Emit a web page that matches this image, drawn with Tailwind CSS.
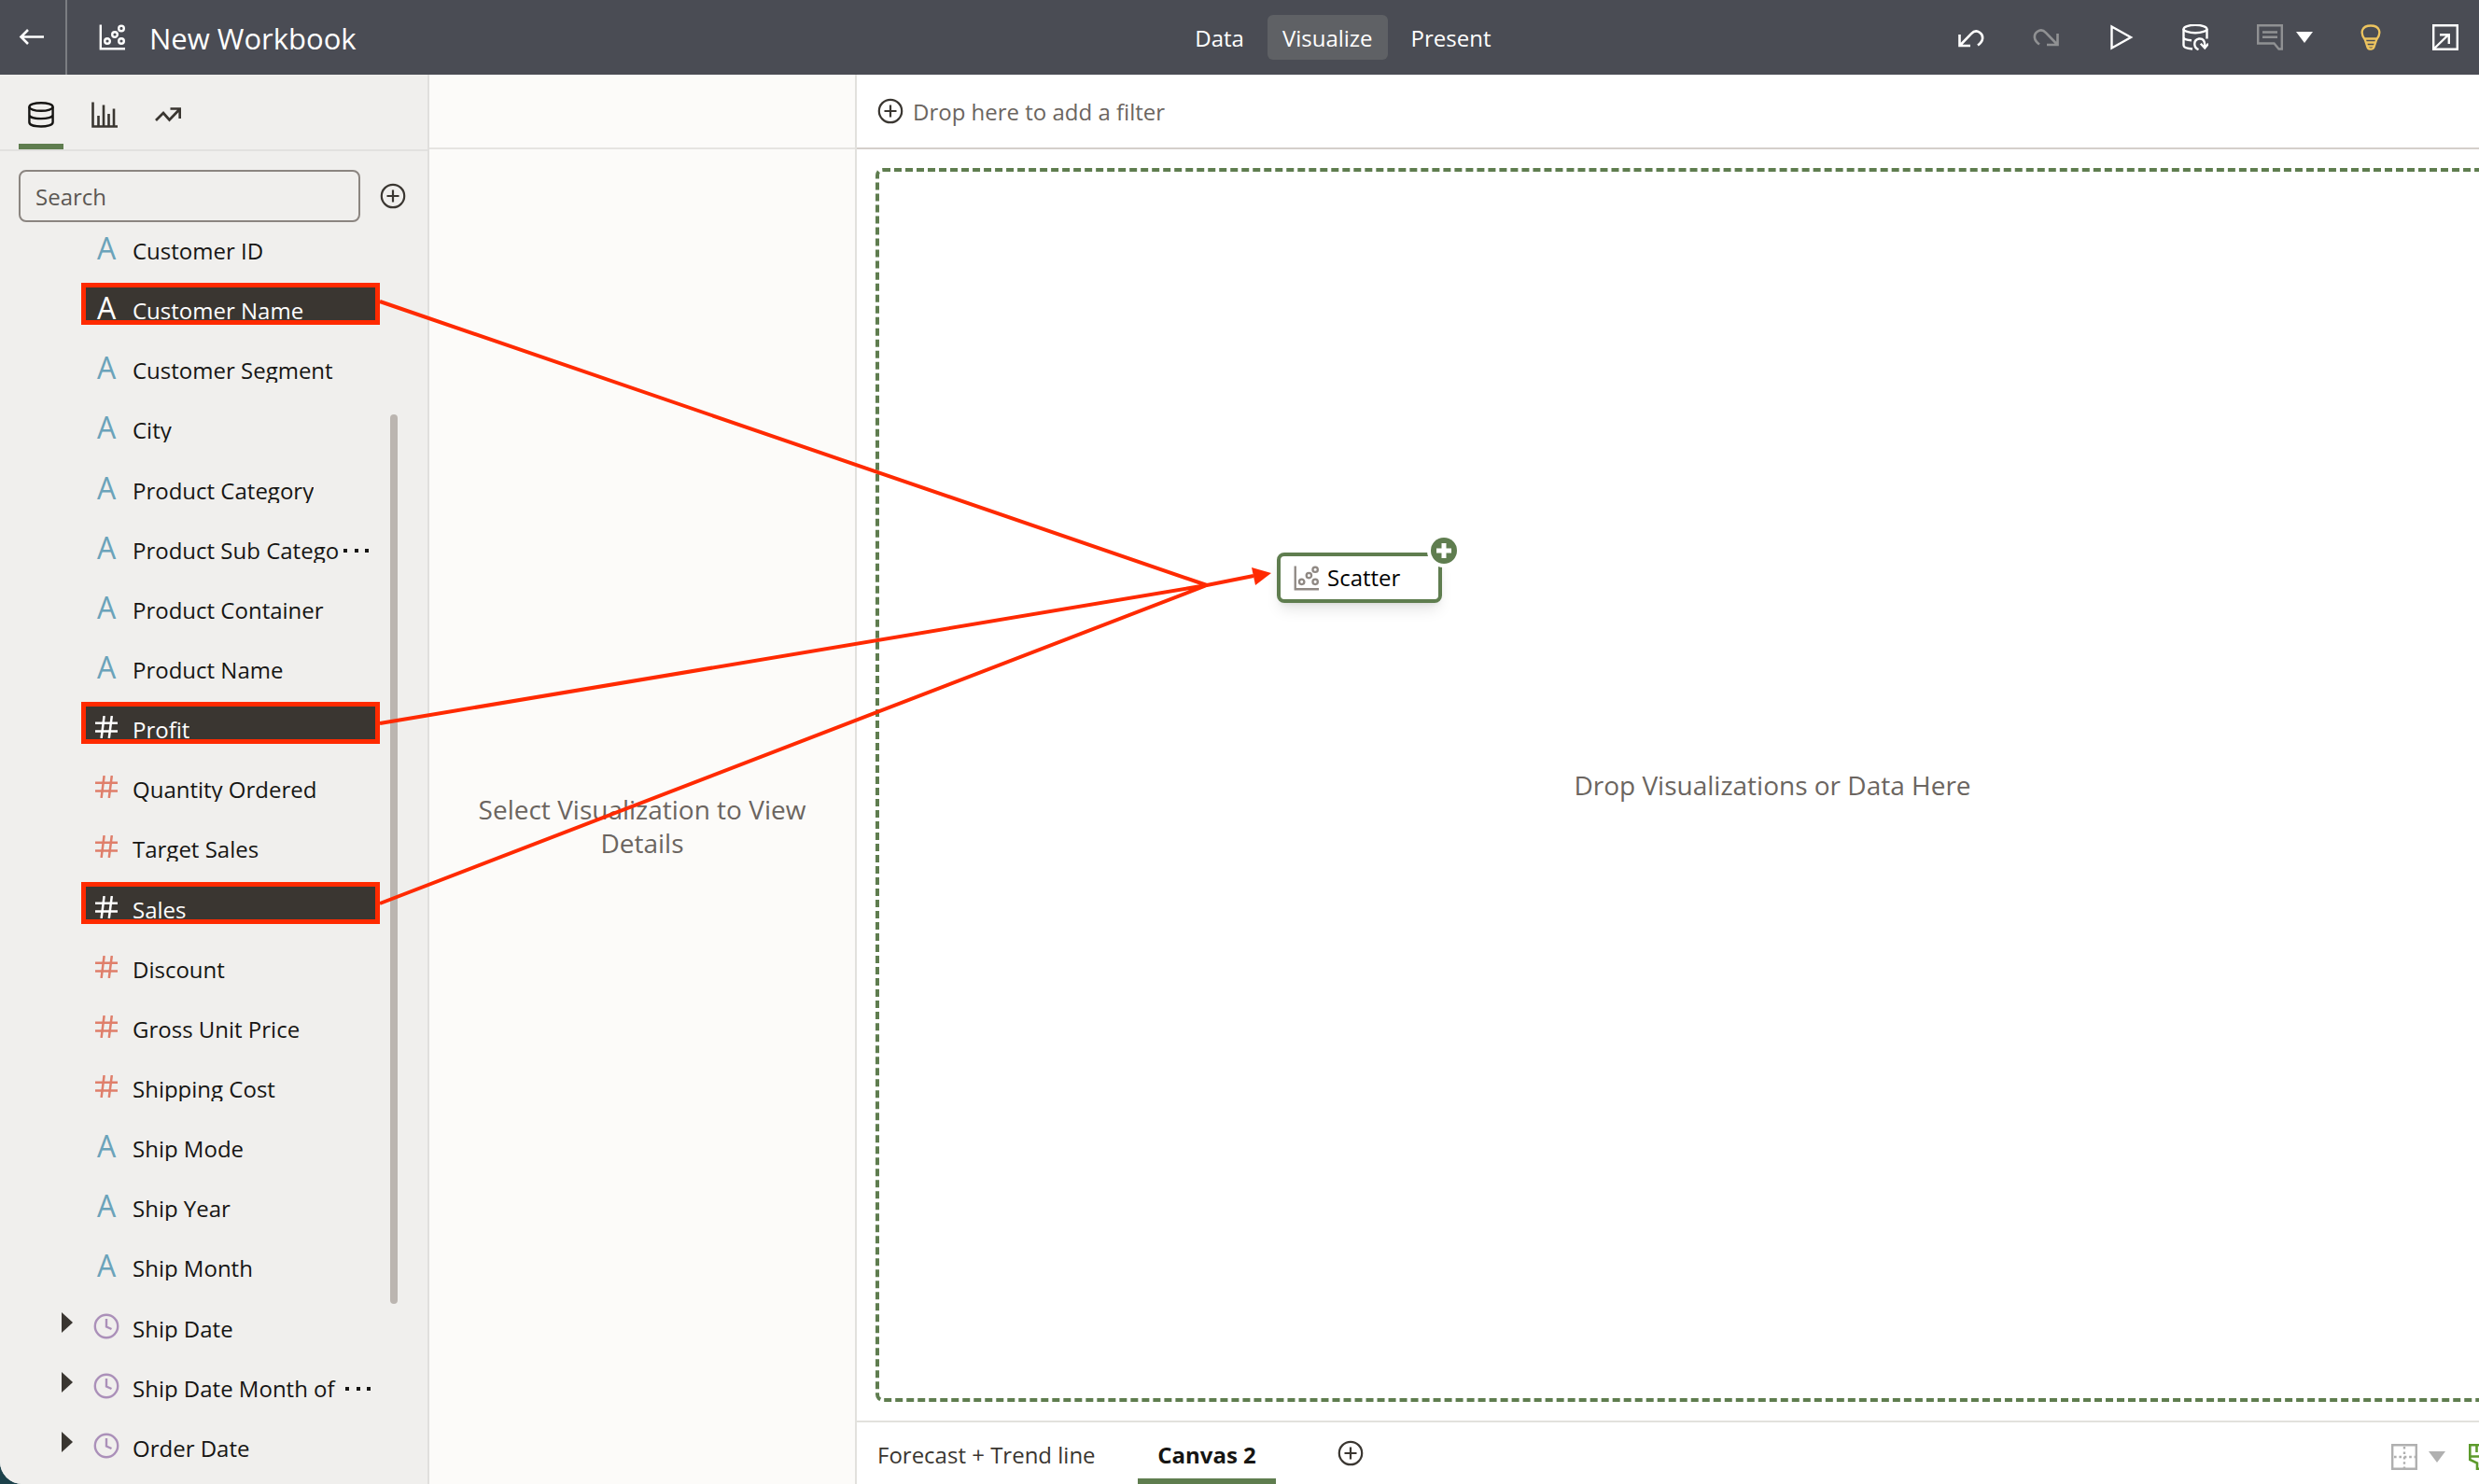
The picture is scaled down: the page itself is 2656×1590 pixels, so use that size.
<!DOCTYPE html>
<html lang="en">
<head>
<meta charset="utf-8">
<meta name="viewport" content="width=device-width, initial-scale=1">
<title>New Workbook</title>
<script src="https://cdn.jsdelivr.net/npm/@tailwindcss/browser@4"></script>
</head>
<body class="bg-[#1d424b] font-['Open_Sans','Noto_Sans',sans-serif] text-2xl text-[#161513]">

<svg class="hidden" aria-hidden="true">
  <symbol id="i-scatter" viewBox="0 0 28 28"><g fill="none" stroke="currentColor" stroke-width="2.4"><path d="M1.8 0.5V26.2H28" /><circle cx="9" cy="18" r="2.8"/><circle cx="17" cy="11" r="2.8"/><circle cx="24" cy="4.4" r="2.8"/><circle cx="24" cy="18" r="2.8"/></g></symbol>
  <symbol id="i-plus" viewBox="0 0 28 28"><g fill="none" stroke="currentColor" stroke-width="2.2"><circle cx="14" cy="14" r="12.2"/><path d="M14 7.5V20.5M7.5 14H20.5"/></g></symbol>
  <symbol id="i-hash" viewBox="0 0 24 24"><path d="M9.6 0L6.6 24M17.8 0L14.8 24M0 7.8H24M0 16.4H24" fill="none" stroke="currentColor" stroke-width="2.5"/></symbol>
  <symbol id="i-clock" viewBox="0 0 28 28"><g fill="none" stroke="currentColor" stroke-width="2.4"><circle cx="14" cy="14" r="12.2"/><path d="M14 6V14.5L19.5 17"/></g></symbol>
</svg>

<div class="relative flex h-screen min-h-[1400px] flex-col overflow-hidden rounded-bl-3xl bg-white">

  <header class="flex h-20 shrink-0 items-center bg-[#4a4c54] text-white">
    <div class="flex h-full w-[47.6%] items-center">
      <button class="flex h-full w-[72px] shrink-0 items-center border-r-2 border-[#7b7d82] pl-5" aria-label="Back">
        <svg class="h-7 w-7" viewBox="0 0 28 28" fill="none" stroke="currentColor" stroke-width="2.6"><path d="M27 13.5H3M10 6L2.5 13.5L10 21"/></svg>
      </button>
      <svg class="ml-[34px] h-7 w-7"><use href="#i-scatter"/></svg>
      <h1 class="ml-[26px] pt-0.5 text-[31px] leading-10">New Workbook</h1>
    </div>
    <nav class="flex gap-[9px]">
      <a href="#data" class="flex h-12 items-center rounded-md px-4 pt-0.5">Data</a>
      <a href="#visualize" class="flex h-12 items-center rounded-md bg-[#5f6165] px-4 pt-0.5">Visualize</a>
      <a href="#present" class="flex h-12 items-center rounded-md px-4 pt-0.5">Present</a>
    </nav>
    <div class="ml-auto flex items-center gap-[52px] pr-[22px]">
      <button aria-label="Undo"><svg class="block h-7 w-7" viewBox="0 0 28 28" fill="none" stroke="currentColor" stroke-width="2.6"><path d="M1.5 11V23H13M2 22.5L14 10.2C17 7 20.5 7 23 8.8C27.5 12 27.5 18 21 22.5"/></svg></button>
      <button aria-label="Redo" class="text-[#909193]"><svg class="block h-7 w-7" viewBox="0 0 28 28" fill="none" stroke="currentColor" stroke-width="2.6"><path d="M26.5 10V22H15M26 21.5L14 9.2C11 6 7.5 6 5 7.8C0.500 11 0.5 17 7 21.5"/></svg></button>
      <button aria-label="Preview"><svg class="block h-7 w-7" viewBox="0 0 28 28" fill="none" stroke="currentColor" stroke-width="2.4"><path d="M4.500 2.500V25.500L25 14Z"/></svg></button>
      <button aria-label="Refresh data"><svg class="block h-7 w-7" viewBox="0 0 28 28" fill="none" stroke="currentColor" stroke-width="2.4"><ellipse cx="14" cy="5" rx="12.5" ry="4.2"/><path d="M1.5 5V22.5C1.5 25 5 26 11 26.5M1.5 14C2 16 5 17 10 17.3M26.5 5V15.5M17.5 27.2C12 25 11.5 17 18 15.5C22.5 15 24.5 18 24.3 24M19.8 20.8L24.2 25.5L28 20.8"/></svg></button>
      <div class="-mr-1 flex items-center gap-[14px]">
        <button aria-label="Comments" class="text-[#909193]"><svg class="block h-7 w-7" viewBox="0 0 28 28" fill="none" stroke="currentColor" stroke-width="2.4"><path d="M1.2 1.2H26.8V26.500H23.5L18.5 20.500H1.2ZM6 8.5H22M6 13.800H22"/></svg></button>
        <button aria-label="Comment options"><svg class="block h-3 w-[18px]" viewBox="0 0 18 12" fill="currentColor"><path d="M0 0H18L9 12Z"/></svg></button>
      </div>
      <button aria-label="Insights" class="text-[#edc45f]"><svg class="block h-7 w-7" viewBox="0 0 28 28" fill="none" stroke="currentColor" stroke-width="2.3"><path d="M7.8 16.5C2 9 4.5 1.5 14 1.5C23.5 1.5 26 9 20.2 16.5L17.5 24.5C16.5 27.3 11.5 27.3 10.5 24.5ZM7 15.5H21M9 19.5H19M10 23.3H18"/></svg></button>
      <button aria-label="Open in new window"><svg class="block h-7 w-7" viewBox="0 0 28 28" fill="none" stroke="currentColor" stroke-width="2.4"><path d="M1.2 1.2H26.8V26.8H1.2ZM2 26L17.5 11M8 11.2H17.8V21"/></svg></button>
    </div>
  </header>

  <div class="flex min-h-0 flex-1">

    <aside class="flex w-[460px] shrink-0 flex-col border-r-2 border-[#e0dfdd] bg-[#f0efed]">
      <div role="tablist" class="flex h-[82px] shrink-0 gap-5 border-b-2 border-[#e2e1df] px-5 text-[#3a3631]">
        <button role="tab" aria-selected="true" aria-label="Data" class="flex h-20 w-12 items-center justify-center border-b-[6px] border-[#5f7d4f] pt-[11px] text-[#161513]">
          <svg class="h-7 w-7" viewBox="0 0 28 28" fill="none" stroke="currentColor" stroke-width="2.4"><ellipse cx="14" cy="5.5" rx="12.6" ry="4.3"/><path d="M1.4 5.5V22C1.4 28 26.6 28 26.6 22V5.5M1.4 14C1.4 19.5 26.6 19.5 26.6 14"/></svg>
        </button>
        <button role="tab" aria-selected="false" aria-label="Visualizations" class="flex h-20 w-12 items-center justify-center pt-[6px]">
          <svg class="h-7 w-7" viewBox="0 0 28 28" fill="none" stroke="currentColor" stroke-width="2.6"><path d="M1.5 0.5V26.5H28M7.5 26V15M13 26V3.5M18.5 26V13M24 26V7.5"/></svg>
        </button>
        <button role="tab" aria-selected="false" aria-label="Analytics" class="flex h-20 w-12 items-center justify-center pt-[6px]">
          <svg class="h-7 w-7" viewBox="0 0 28 28" fill="none" stroke="currentColor" stroke-width="2.7"><path d="M1 20L9 12L15.5 19.5L26.5 8M16.5 7.5H26.7V18"/></svg>
        </button>
      </div>
      <div class="flex h-[77px] shrink-0 items-start justify-between pl-5 pr-[23px] pt-5">
        <input type="text" aria-label="Search" placeholder="Search" class="h-14 w-[366px] rounded-lg border-2 border-[#8b8580] bg-transparent px-4 text-[#161513] placeholder:text-[#5c5853]">
        <button aria-label="Add data" class="flex h-14 items-center text-[#3a3631]"><svg class="h-7 w-7"><use href="#i-plus"/></svg></button>
      </div>
      <div class="flex min-h-0 flex-1">
        <ul id="fields" class="grid w-[418px] auto-rows-fr pb-1"></ul>
        <div class="w-2 pb-[193px] pt-[205px]"><div class="h-full rounded-full bg-[#bbb5b0]"></div></div>
      </div>
    </aside>

    <section class="flex w-[458px] shrink-0 flex-col border-r-2 border-[#e2e1dd] bg-[#fcfbf9]" aria-label="Details">
      <div class="h-20 shrink-0 border-b-2 border-[#e6e4e1]"></div>
      <div class="flex flex-1 items-center justify-center px-10 pt-5">
        <p class="text-center text-[28px] leading-9 text-[#6b6560]">Select Visualization to View Details</p>
      </div>
    </section>

    <main class="flex min-w-0 flex-1 flex-col overflow-hidden">
      <div class="flex h-20 shrink-0 items-center gap-[10px] border-b-2 border-[#d4cfcb] px-[22px] text-[#6b6560]">
        <svg class="h-7 w-7 text-[#3a3631]"><use href="#i-plus"/></svg>
        <span class="pt-0.5">Drop here to add a filter</span>
      </div>
      <div class="flex min-h-0 flex-1 py-5 pl-5">
        <div class="-mr-[204px] flex flex-1 items-center justify-center rounded-lg border-4 border-dashed border-[#5f7d4f]">
          <p class="text-[28px] leading-9 text-[#6b6560]">Drop Visualizations or Data Here</p>
        </div>
      </div>
      <footer class="flex h-[68px] shrink-0 items-center border-t-2 border-[#e2e1dd] pl-[22px]">
        <button class="h-full w-[232px] whitespace-nowrap pt-1 text-left text-[#3a3631]">Forecast + Trend line</button>
        <button class="ml-[47px] h-full w-[148px] whitespace-nowrap border-b-[6px] border-[#5f7d4f] pt-[10px] font-bold">Canvas 2</button>
        <button aria-label="Add canvas" class="ml-[66px] text-[#3a3631]"><svg class="block h-7 w-7"><use href="#i-plus"/></svg></button>
        <button aria-label="Canvas layout" class="ml-auto flex items-center gap-3 pt-2 text-[#b0b0b0]">
          <svg class="h-7 w-7" viewBox="0 0 28 28" fill="none" stroke="currentColor" stroke-width="2.4"><path d="M1.2 1.2H26.8V26.8H1.2Z"/><path d="M14 3V26M3 14H26" stroke-dasharray="2.6 2.8"/></svg>
          <svg class="h-3 w-[18px]" viewBox="0 0 18 12" fill="currentColor"><path d="M0 0H18L9 12Z"/></svg>
        </button>
        <button aria-label="Brush" class="ml-[25px] w-[11px] overflow-hidden pt-2 text-[#5c9a2c]">
          <svg class="block h-7 w-7" viewBox="0 0 28 28" fill="none" stroke="currentColor" stroke-width="2.6"><path d="M1.3 1.3H26.7V17L20 21V26.7H9V20.5L1.3 17ZM1.3 13.5H26.7M8.5 1.3V9"/></svg>
        </button>
      </footer>
    </main>
  </div>

  <!-- Visualization being dragged onto the canvas -->
  <div class="absolute left-[1368px] top-[592px] flex h-[54px] w-[177px] items-center gap-[9px] rounded-lg border-4 border-[#5f7d4f] bg-white pl-[14px] text-black shadow-lg shadow-black/10">
    <svg class="h-[27px] w-[27px] text-[#8f8883]"><use href="#i-scatter"/></svg>
    <span>Scatter</span>
    <svg class="absolute -right-6 -top-6 h-9 w-9" viewBox="0 0 36 36"><circle cx="18" cy="18" r="18" fill="#fff"/><circle cx="18" cy="18" r="14" fill="#5f7d4f"/><path d="M18 10V26M10 18H26" stroke="#fff" stroke-width="5"/></svg>
  </div>

  <!-- Drag paths from the selected fields to the visualization -->
  <svg class="pointer-events-none absolute left-0 top-0 h-[1000px] w-[1400px]" viewBox="0 0 1400 1000" fill="none" stroke="#ff2a00" stroke-width="4">
    <path d="M407 323L1293 627M407 775L1293 627L1343 617M407 968L1293 627"/>
    <path d="M1341 608L1345 627L1362 614Z" fill="#ff2a00" stroke="none"/>
  </svg>
</div>

<script>
  const fields = [
    ['text', 'Customer ID'], ['text', 'Customer Name', 'selected'], ['text', 'Customer Segment'],
    ['text', 'City'], ['text', 'Product Category'], ['text', 'Product Sub Catego', 'cut'],
    ['text', 'Product Container'], ['text', 'Product Name'], ['number', 'Profit', 'selected'],
    ['number', 'Quantity Ordered'], ['number', 'Target Sales'], ['number', 'Sales', 'selected'],
    ['number', 'Discount'], ['number', 'Gross Unit Price'], ['number', 'Shipping Cost'],
    ['text', 'Ship Mode'], ['text', 'Ship Year'], ['text', 'Ship Month'],
    ['date', 'Ship Date'], ['date', 'Ship Date Month of ', 'cut'], ['date', 'Order Date']
  ];
  const icons = {
    text: on => `<span class="${on ? 'text-white' : 'text-[#6ba3ba]'} text-[32px] leading-6">A</span>`,
    number: on => `<svg class="h-6 w-6 ${on ? 'text-white' : 'text-[#df7f6b]'}"><use href="#i-hash"/></svg>`,
    date: () => `<svg class="h-7 w-7 text-[#ab90b9]"><use href="#i-clock"/></svg>`
  };
  const arrow = '<svg class="mt-3 h-[22px] w-3" viewBox="0 0 12 22" fill="#3a3631"><path d="M0 0L12 11L0 22Z"/></svg>';
  const dots = '<svg class="ml-[5px] mt-[18px] h-1 w-7 shrink-0" viewBox="0 0 28 4" fill="#161513"><path d="M0 0H4V4H0ZM12 0H16V4H12ZM23 0H27V4H23Z"/></svg>';
  document.getElementById('fields').innerHTML = fields.map(([type, name, state]) => {
    const on = state === 'selected';
    return `<li class="flex pl-[66px]">
      <span class="w-[21px] shrink-0">${type === 'date' ? arrow : ''}</span>
      <button class="flex h-[45px] w-[320px] items-start border-[5px] ${on ? 'overflow-hidden border-[#ff2a00] bg-[#3a3631] text-white' : 'border-transparent'}">
        <span class="flex h-11 w-11 shrink-0 items-center justify-center">${icons[type](on)}</span>
        <span class="ml-[6px] mt-[5px] flex h-[33px] overflow-hidden whitespace-pre leading-10">${name}${state === 'cut' ? dots : ''}</span>
      </button>
    </li>`;
  }).join('');
</script>
</body>
</html>
